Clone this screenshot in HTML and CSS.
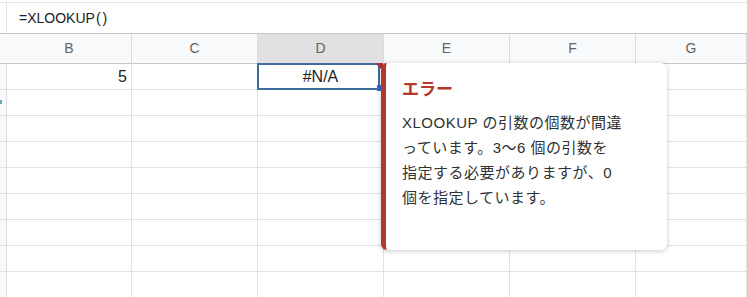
FILE: index.html
```html
<!DOCTYPE html>
<html lang="ja">

<head>
    <meta charset="UTF-8">
    <meta name="viewport" content="width=device-width, initial-scale=1.0">
    <title>XLOOKUP エラー</title>
    <link rel="stylesheet" href="styles.css">
</head>

<body>
    <!-- 数式バー -->
    <div class="formula-bar">
        <div class="fx-edge"></div>
        <div class="formula">=XLOOKUP<span class="paren">(</span><span class="paren">)</span></div>
    </div>

    <!-- シート -->
    <div class="sheet">
        <div class="cell head corner"></div>
        <div class="cell head">B</div>
        <div class="cell head">C</div>
        <div class="cell head selected">D</div>
        <div class="cell head">E</div>
        <div class="cell head">F</div>
        <div class="cell head">G</div>

        <div class="cell row-head"></div>
        <div class="cell num">5</div>
        <div class="cell"></div>
        <div class="cell active">
            #N/A
            <span class="sel-border"></span>
            <span class="err-mark"></span>
            <span class="fill-handle"></span>
            <div class="tooltip">
                <div class="tooltip-title">エラー</div>
                <p class="tooltip-text">XLOOKUP の引数の個数が間違<br>っています。3〜6 個の引数を<br>指定する必要がありますが、0<br>個を指定しています。</p>
            </div>
        </div>
        <div class="cell"></div>
        <div class="cell"></div>
        <div class="cell"></div>

        <div class="cell row-head"><span class="row-dot"></span></div>
        <div class="cell"></div><div class="cell"></div><div class="cell"></div><div class="cell"></div><div class="cell"></div><div class="cell"></div>
        <div class="cell row-head"></div>
        <div class="cell"></div><div class="cell"></div><div class="cell"></div><div class="cell"></div><div class="cell"></div><div class="cell"></div>
        <div class="cell row-head"></div>
        <div class="cell"></div><div class="cell"></div><div class="cell"></div><div class="cell"></div><div class="cell"></div><div class="cell"></div>
        <div class="cell row-head"></div>
        <div class="cell"></div><div class="cell"></div><div class="cell"></div><div class="cell"></div><div class="cell"></div><div class="cell"></div>
        <div class="cell row-head"></div>
        <div class="cell"></div><div class="cell"></div><div class="cell"></div><div class="cell"></div><div class="cell"></div><div class="cell"></div>
        <div class="cell row-head"></div>
        <div class="cell"></div><div class="cell"></div><div class="cell"></div><div class="cell"></div><div class="cell"></div><div class="cell"></div>
        <div class="cell row-head"></div>
        <div class="cell"></div><div class="cell"></div><div class="cell"></div><div class="cell"></div><div class="cell"></div><div class="cell"></div>
        <div class="cell row-head"></div>
        <div class="cell"></div><div class="cell"></div><div class="cell"></div><div class="cell"></div><div class="cell"></div><div class="cell"></div>
    </div>
</body>

</html>
```

FILE: styles.css
```css
/* スプレッドシート */
body {
    margin: 0;
    padding: 0;
    background-color: #ffffff;
    font-family: "Liberation Sans", "Noto Sans CJK JP", sans-serif;
    color: #202124;
    overflow: hidden;
}

.formula-bar {
    display: flex;
    height: 30px;
    margin-top: 2px;
    border-top: 1px solid #e3e3e3;
    border-bottom: 1px solid #c7c7c7;
}

.fx-edge {
    width: 6px;
    border-right: 1px solid #e3e3e3;
}

.formula {
    padding-left: 12px;
    font-size: 14px;
    line-height: 30px;
    color: #202124;
}

.paren {
    padding: 0 1px;
}

.sheet {
    display: grid;
    grid-template-columns: 7px 125px 126px 126px 126px 126px 1fr;
    grid-template-rows: 30px;
    grid-auto-rows: 26px;
}

.cell {
    box-sizing: border-box;
    border-right: 1px solid #e2e2e2;
    border-bottom: 1px solid #e2e2e2;
    font-size: 16px;
    line-height: 25px;
    padding: 0 4px;
}

.head {
    background-color: #f8f9fa;
    color: #5f6368;
    font-size: 14px;
    line-height: 29px;
    text-align: center;
    border-right-color: #dadce0;
    border-bottom-color: #c4c7c5;
}

.head.selected {
    background-color: #e1e1e1;
}

.row-head {
    background-color: #f8f9fa;
    border-right-color: #dadce0;
    padding: 0;
    position: relative;
}

.row-dot {
    position: absolute;
    left: 0;
    top: 10px;
    width: 2px;
    height: 4px;
    background-color: #6aa7b3;
}

.num {
    text-align: right;
}

.active {
    position: relative;
    text-align: center;
}

.sel-border {
    position: absolute;
    left: -1px;
    top: -1px;
    right: 3px;
    bottom: -1px;
    border: 2px solid #3f6c9f;
}

.err-mark {
    position: absolute;
    top: -1px;
    right: 0;
    width: 0;
    height: 0;
    border-top: 8px solid #a8343f;
    border-left: 8px solid transparent;
}

.fill-handle {
    position: absolute;
    right: 1px;
    bottom: -2px;
    width: 5px;
    height: 6px;
    background-color: #3367d6;
}

.tooltip {
    position: absolute;
    left: calc(100% - 2px);
    top: -1px;
    z-index: 2;
    width: 286px;
    box-sizing: border-box;
    padding: 17px 20px 40px 16px;
    background-color: #ffffff;
    border-left: 5px solid #b3392d;
    border-radius: 6px;
    box-shadow: 0 1px 5px rgba(0, 0, 0, 0.22);
    text-align: left;
}

.tooltip-title {
    color: #b5372a;
    font-size: 17px;
    font-weight: bold;
    line-height: 20px;
}

.tooltip-text {
    margin: 10px 0 0;
    color: #303134;
    font-size: 15px;
    line-height: 25px;
    letter-spacing: 0.5px;
    white-space: nowrap;
}
```
